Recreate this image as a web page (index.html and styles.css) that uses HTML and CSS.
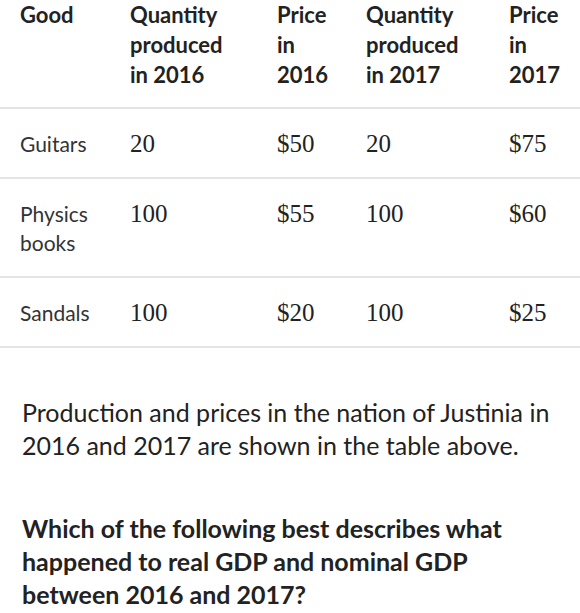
FILE: index.html
```html
<!DOCTYPE html>
<html lang="en">
<head>
  <meta charset="UTF-8">
  <title>Justinia GDP question</title>
  <meta name="viewport" content="width=device-width, initial-scale=1.0">
  <link rel="stylesheet" href="styles.css">
</head>
<body>

<table class="goods">
  <thead>
    <tr>
      <th class="c1">Good</th>
      <th class="c2">Quantity<br>produced<br>in 2016</th>
      <th class="c3">Price<br>in<br>2016</th>
      <th class="c4">Quantity<br>produced<br>in 2017</th>
      <th class="c5">Price<br>in<br>2017</th>
    </tr>
  </thead>
  <tbody>
    <tr>
      <td>Guitars</td>
      <td><span class="num">20</span></td>
      <td><span class="num">$50</span></td>
      <td><span class="num">20</span></td>
      <td><span class="num">$75</span></td>
    </tr>
    <tr>
      <td>Physics<br>books</td>
      <td><span class="num">100</span></td>
      <td><span class="num">$55</span></td>
      <td><span class="num">100</span></td>
      <td><span class="num">$60</span></td>
    </tr>
    <tr>
      <td>Sandals</td>
      <td><span class="num">100</span></td>
      <td><span class="num">$20</span></td>
      <td><span class="num">100</span></td>
      <td><span class="num">$25</span></td>
    </tr>
  </tbody>
</table>

<div class="question">
  <p class="intro">Production and prices in the nation of Justinia in 2016 and 2017 are shown in the table above.</p>
  <p class="ask">Which of the following best describes what happened to real GDP and nominal GDP between 2016 and 2017?</p>
</div>

</body>
</html>
```

FILE: styles.css
```css
body {
  margin: 0;
  padding: 0;
  background: #fff;
  color: #333;
  font-family: Lato, 'Open Sans', sans-serif;
}

.goods {
  width: 580px;
  border-collapse: collapse;
  table-layout: fixed;
}

.goods th,
.goods td {
  text-align: left;
  vertical-align: top;
  padding: 0 0 0 20px;
  white-space: nowrap;
}

.goods th {
  font-size: 22px;
  line-height: 30px;
  font-weight: bold;
  color: #222;
  padding-bottom: 17px;
  border-bottom: 2px solid #e4e4e4;
}

.goods td {
  font-size: 21px;
  line-height: 29px;
  padding-top: 20px;
  padding-bottom: 19px;
  border-bottom: 2px solid #e4e4e4;
}

.c1 { width: 90px; }
.c2 { width: 127px; }
.c3 { width: 69px; }
.c4 { width: 123px; }
.c5 { width: 71px; }

.num {
  font-family: 'Liberation Serif', serif;
  font-size: 25px;
  line-height: 1;
  color: #222;
}

.question {
  padding: 0 22px;
  font-size: 25px;
  line-height: 33px;
  color: #222;
}

.intro {
  margin: 48px 0 0;
}

.ask {
  margin: 50px 0 0;
  font-weight: bold;
}
```
